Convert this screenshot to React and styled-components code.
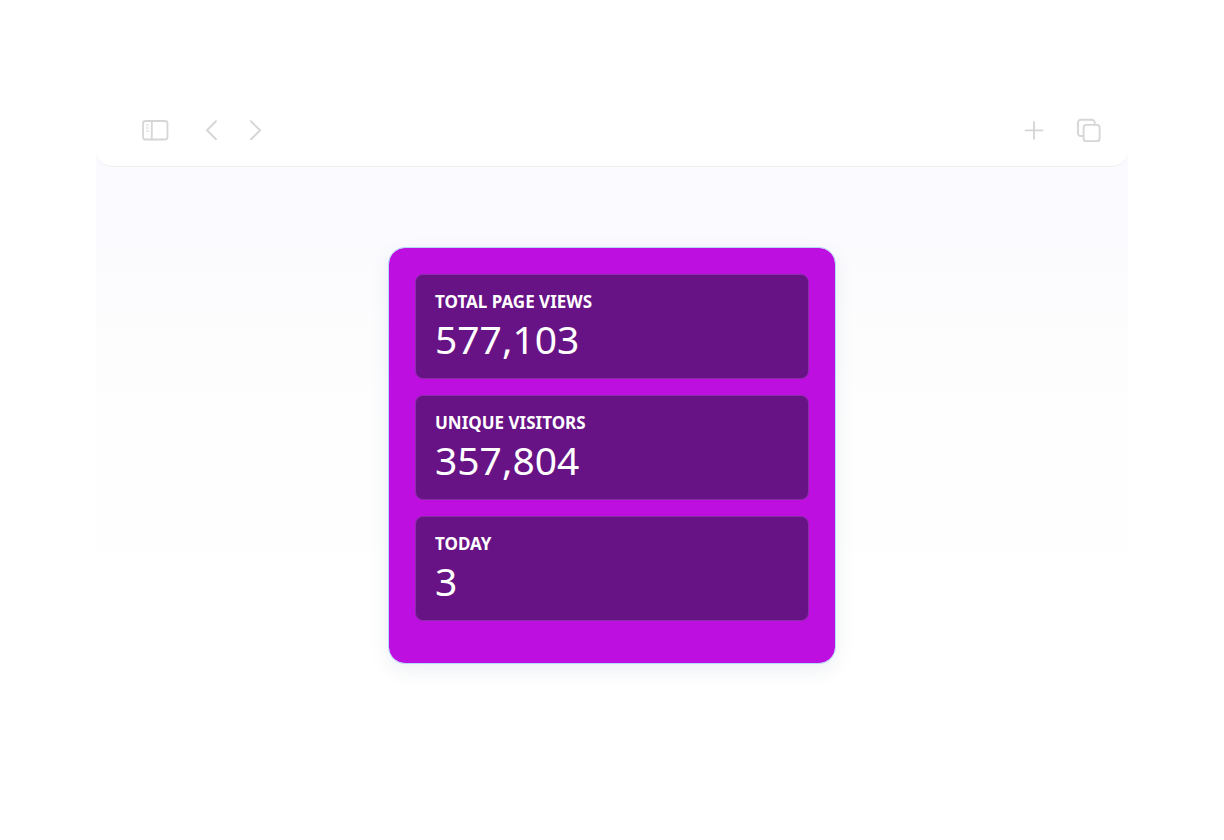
import React from "react";
import styled, { createGlobalStyle } from "styled-components";

const GlobalStyle = createGlobalStyle`
  * { box-sizing: border-box; }
  body {
    margin: 0;
    background: #ffffff;
    font-family: "Noto Sans", sans-serif;
  }
`;

const Page = styled.div`
  padding: 96px;
`;

const Browser = styled.div`
  background: linear-gradient(to bottom, #ffffff 0, #fafaff 60px, #fafaff 120px, #fcfcfe 180px, #fdfdfe 250px, #fefefe 330px, #fefefe 450px, #ffffff 460px);
`;

const Toolbar = styled.header`
  display: flex;
  justify-content: space-between;
  align-items: center;
  height: 71px;
  padding: 0 24px 2px 44px;
  background: #ffffff;
  border-bottom: 1px solid #efeff0;
  border-radius: 0 0 16px 16px;
`;

const Tools = styled.div`
  display: flex;
  align-items: center;
  gap: ${(p) => p.$gap}px;
`;

const ToolButton = styled.button`
  display: flex;
  justify-content: center;
  align-items: center;
  width: ${(p) => p.$width || 30}px;
  height: 30px;
  padding: 0;
  border: 0;
  background: none;
  color: #d6d6d6;

  svg {
    display: block;
    fill: none;
    stroke: currentColor;
    stroke-width: 2;
    stroke-linecap: round;
    stroke-linejoin: round;
  }
`;

const Content = styled.main`
  display: flex;
  justify-content: center;
  padding-top: 80px;
`;

const StatsCard = styled.section`
  display: flex;
  flex-direction: column;
  gap: 16px;
  width: 100%;
  max-width: 448px;
  padding: 26px 26px 42px;
  background: #bd10e0;
  background-clip: padding-box;
  border: 1px solid #b5d9fa;
  border-radius: 17px;
  box-shadow: 0 6px 20px rgba(50, 80, 120, 0.09);
`;

const Stat = styled.div`
  padding: 15px 19px 14px;
  background: #671285;
  border: 1px solid #8a2ba8;
  border-radius: 8px;
  color: #ffffff;
`;

const StatLabel = styled.h2`
  margin: 0;
  font-size: 17px;
  line-height: 24px;
  font-weight: 700;
`;

const StatValue = styled.p`
  margin: 0;
  font-size: 39px;
  line-height: 50px;
`;

const stats = [
  { label: "TOTAL PAGE VIEWS", value: "577,103" },
  { label: "UNIQUE VISITORS", value: "357,804" },
  { label: "TODAY", value: "3" },
];

export default function App() {
  return (
    <>
      <GlobalStyle />
      <Page>
        <Browser>
          <Toolbar>
            <Tools $gap={34}>
              <ToolButton aria-label="Toggle sidebar">
                <svg width="30" height="30" viewBox="0 0 30 30">
                  <rect x="3" y="6" width="24.5" height="18.5" rx="2.5" strokeWidth="1.8" />
                  <path d="M11.8 6v18.5" strokeWidth="1.8" />
                  <path d="M6.3 10h2.2M6.3 13h2.2M6.3 16h2.2" strokeWidth="1.2" />
                </svg>
              </ToolButton>
              <Tools $gap={28}>
                <ToolButton $width={16} aria-label="Back">
                  <svg width="16" height="30" viewBox="0 0 16 30">
                    <path d="M12 6.3L3 15.3l9 9" strokeWidth="2" />
                  </svg>
                </ToolButton>
                <ToolButton $width={16} aria-label="Forward">
                  <svg width="16" height="30" viewBox="0 0 16 30">
                    <path d="M3 6.3l9 9-9 9" strokeWidth="2" />
                  </svg>
                </ToolButton>
              </Tools>
            </Tools>
            <Tools $gap={25}>
              <ToolButton aria-label="New tab">
                <svg width="30" height="30" viewBox="0 0 30 30">
                  <path d="M15 7v16.8M6.6 15.4h16.8" strokeWidth="1.9" />
                </svg>
              </ToolButton>
              <ToolButton aria-label="Show all tabs">
                <svg width="30" height="30" viewBox="0 0 30 30">
                  <path d="M9.5 21H6.7A2.7 2.7 0 0 1 4 18.3V7.5a2.7 2.7 0 0 1 2.7-2.7H18a2.7 2.7 0 0 1 2.700 2.700V9.5" strokeWidth="1.9" />
                  <rect x="9.6" y="9.9" width="16" height="16.2" rx="2.7" strokeWidth="1.9" />
                </svg>
              </ToolButton>
            </Tools>
          </Toolbar>
          <Content>
            <StatsCard>
              {stats.map((stat) => (
                <Stat key={stat.label}>
                  <StatLabel>{stat.label}</StatLabel>
                  <StatValue>{stat.value}</StatValue>
                </Stat>
              ))}
            </StatsCard>
          </Content>
        </Browser>
      </Page>
    </>
  );
}
